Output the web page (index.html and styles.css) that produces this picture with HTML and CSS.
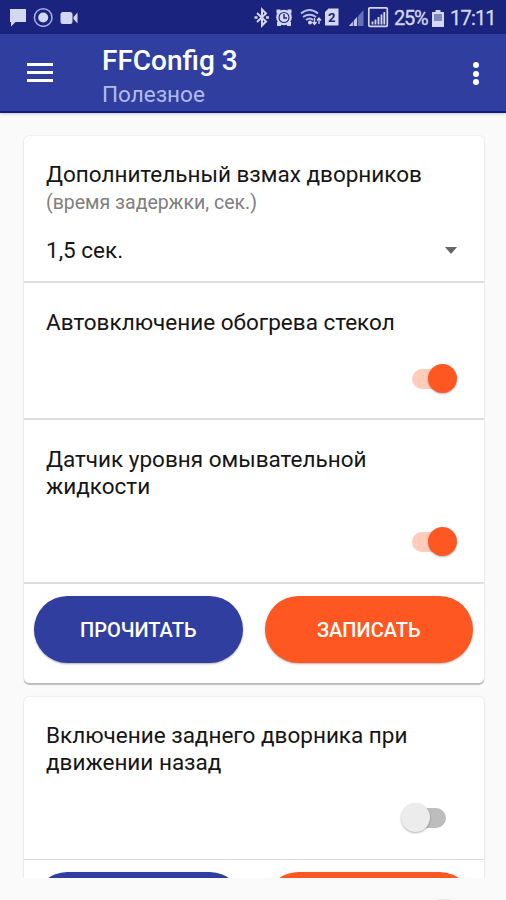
FILE: index.html
```html
<!DOCTYPE html>
<html lang="ru">
<head>
<meta charset="utf-8">
<title>FFConfig 3</title>
<link rel="stylesheet" href="styles.css">
</head>
<body>
<div class="screen">
  <div class="status">
    <svg class="status-left" viewBox="0 0 72 20" width="72" height="20" fill="#d3d7f2">
      <path d="M2 2h16v13H7.500L3 19.500V15H2z"/>
      <circle cx="35.200" cy="10.500" r="8.800" fill="none" stroke="#a4abe0" stroke-width="1.600"/>
      <circle cx="35.200" cy="10.500" r="5"/>
      <rect x="52.500" y="5" width="12" height="12" rx="2.500"/>
      <path d="M65.500 10l4-4.500v11l-4-4.500z"/>
    </svg>
    <svg class="status-right" viewBox="0 0 136 24" width="136" height="24" fill="#d3d7f2">
      <path d="M4 8l9 8.500-4 4V4.500l4 4L4 17" fill="none" stroke="#d3d7f2" stroke-width="2"/>
      <path d="M1.500 12.500h3M13 12.500h3" stroke="#d3d7f2" stroke-width="2.400"/>
      <circle cx="31" cy="12.500" r="7.800"/>
      <path d="M23.500 4.500h4v4h-4zM34.500 4.500h4v4h-4zM24 17h4v4h-4zM34 17h4v4h-4z"/>
      <circle cx="31" cy="12.500" r="5" fill="none" stroke="#1a237e" stroke-width="1.100"/>
      <path d="M31 9v4h3" fill="none" stroke="#1a237e" stroke-width="1.400"/>
      <path d="M48 8.500q8.500-7 17 0M50 12q6.500-4.500 13 0M53 15q4-3 7 0" fill="none" stroke="#b9bee8" stroke-width="2"/>
      <circle cx="57" cy="17.500" r="2"/>
      <path d="M61.500 13v6M59.500 17l2 2.500 2-2.500M66 19v-6M64 15.500l2-2.500 2 2.500" fill="none" stroke="#d3d7f2" stroke-width="1.300"/>
      <path d="M75.500 3.500H85.500v17H72V7z"/>
      <text class="sim" x="78.800" y="17.200" text-anchor="middle">2</text>
      <path d="M110.500 5v16H96z" fill="#6670b8"/>
      <path d="M96 21l8-9v9z" fill="#c4c9ec"/>
      <path d="M100.300 12v9M104.500 8v13" stroke="#1a237e" stroke-width=".8"/>
      <rect x="115.800" y="2.800" width="18.500" height="18.500" rx="1" fill="none" stroke="#d3d7f2" stroke-width="1.700"/>
      <path d="M119.500 19.500v-3M122.500 19.500v-5M125.500 19.500v-7.500M128.500 19.500V9.500M131.300 19.500V7" stroke="#d3d7f2" stroke-width="1.800"/>
    </svg>
    <span class="percent">25%</span>
    <svg class="battery" viewBox="0 0 12 17" width="12" height="17">
      <path d="M3.500 0h5v2H12v15H0V2h3.500z" fill="#d3d7f2"/>
      <path d="M2 4h8v7H2z" fill="#8088c4"/>
    </svg>
    <span class="clock">17:11</span>
  </div>
  <header class="appbar">
    <div class="burger"><i></i><i></i><i></i></div>
    <div class="titles">
      <h1>FFConfig 3</h1>
      <p>Полезное</p>
    </div>
    <div class="more"><i></i><i></i><i></i></div>
  </header>
  <main class="content">
    <section class="card">
      <div class="row select-row">
        <h2>Дополнительный взмах дворников</h2>
        <p class="hint">(время задержки, сек.)</p>
        <div class="select"><span>1,5 сек.</span><i class="arrow"></i></div>
      </div>
      <div class="row heat-row">
        <h2>Автовключение обогрева стекол</h2>
        <div class="switch on"><i></i></div>
      </div>
      <div class="row fluid-row">
        <h2>Датчик уровня омывательной<br>жидкости</h2>
        <div class="switch on"><i></i></div>
      </div>
      <div class="actions">
        <button class="read">ПРОЧИТАТЬ</button>
        <button class="write">ЗАПИСАТЬ</button>
      </div>
    </section>
    <section class="card">
      <div class="row rear-row">
        <h2>Включение заднего дворника при<br>движении назад</h2>
        <div class="switch"><i></i></div>
      </div>
      <div class="actions">
        <button class="read"></button>
        <button class="write"></button>
      </div>
    </section>
  </main>
  <footer class="next"><i></i></footer>
</div>
</body>
</html>
```
FILE: styles.css
```css
* { box-sizing: border-box; margin: 0; padding: 0; }
body { background: #fafafa; font-family: Roboto, "Liberation Sans", sans-serif; color: #151515; }
.screen { width: 506px; height: 900px; overflow: hidden; }
.status { height: 34px; background: #1a237e; display: flex; align-items: center; color: #d3d7f2; font-size: 20px; line-height: 34px; white-space: nowrap; }
.status-left { margin-left: 8px; }
.status-right { margin-left: 173px; }
.sim { font: 700 13px Roboto, sans-serif; fill: #1a237e; }
.percent { width: 36px; margin-left: 5px; padding-top: 2px; letter-spacing: -1.200px; -webkit-text-stroke: .3px #d3d7f2; }
.battery { margin: 3px 0 0 2px; }
.clock { margin-left: 6px; padding-top: 2px; letter-spacing: -.8px; -webkit-text-stroke: .3px #d3d7f2; }
.appbar { height: 79px; background: #303f9f; border-bottom: 2px solid #101a86; display: flex; box-shadow: 0 1px 3px rgba(0, 0, 0, .2); }
.burger { width: 26px; margin: 29px 0 0 27px; display: flex; flex-direction: column; gap: 5px; }
.burger i { height: 3px; background: #fff; }
.titles { margin: 10px 0 0 49px; flex: 1; }
.titles h1 { font-size: 28px; line-height: 34px; font-weight: 500; color: #fff; }
.titles p { font-size: 22.500px; line-height: 30px; color: #b3baec; margin-top: 1px; }
.more { margin: 28px 27px 0 0; display: flex; flex-direction: column; gap: 2.500px; }
.more i { width: 6px; height: 6px; border-radius: 50%; background: #fff; }
.content { height: 765px; overflow: hidden; padding: 23px 22px 0 24px; display: flex; flex-direction: column; gap: 14px; }
.card { flex: none; background: #fff; border-radius: 5px; box-shadow: 0 0 2px rgba(0, 0, 0, .15), 0 2px 1px rgba(0, 0, 0, .23); }
.row { padding: 0 22px; border-bottom: 2px solid #dedede; }
.row h2 { font-size: 22.500px; line-height: 27px; font-weight: 400; white-space: nowrap; }
.select-row { height: 147px; padding-top: 25px; }
.hint { font-size: 19.500px; line-height: 24px; margin-top: 3px; color: #808080; }
.select { display: flex; align-items: center; justify-content: space-between; margin-top: 21px; font-size: 22.500px; line-height: 28px; }
.arrow { border: 6.500px solid transparent; border-top: 7px solid #666; border-bottom: 0; margin-right: 5px; }
.heat-row { height: 137px; padding-top: 26px; }
.fluid-row { height: 164px; padding-top: 26px; }
.rear-row { height: 163px; padding-top: 25px; border-bottom-width: 1px; }
.switch { width: 45px; height: 29px; margin: 28px 5px 0 auto; display: flex; align-items: center; }
.fluid-row .switch { margin-top: 27px; }
.switch::before { content: ""; width: 34px; height: 20px; border-radius: 10px; background: #bdbdbd; margin-left: 11px; }
.switch i { width: 29px; height: 29px; border-radius: 50%; background: #ececec; margin-left: -45px; box-shadow: 0 1px 2px rgba(0, 0, 0, .3); }
.switch.on::before { background: #ffccbc; margin-left: 0; }
.switch.on i { background: #ff5722; margin-left: -18px; }
.rear-row .switch { margin-right: 16px; margin-top: 27px; }
.actions { height: 99px; display: flex; gap: 22px; padding: 12px 11px 0 10px; }
.actions button { flex: 1; height: 67px; border: 0; border-radius: 34px; color: #fff; font: 500 20px Roboto, sans-serif; box-shadow: 0 1px 2px rgba(0, 0, 0, .3); }
.actions .read { background: #303f9f; }
.actions .write { background: #ff5722; }
.next { padding: 21px 55px 0 0; display: flex; justify-content: flex-end; }
.next i { width: 14px; height: 1px; background: #e6e6e6; }
```
